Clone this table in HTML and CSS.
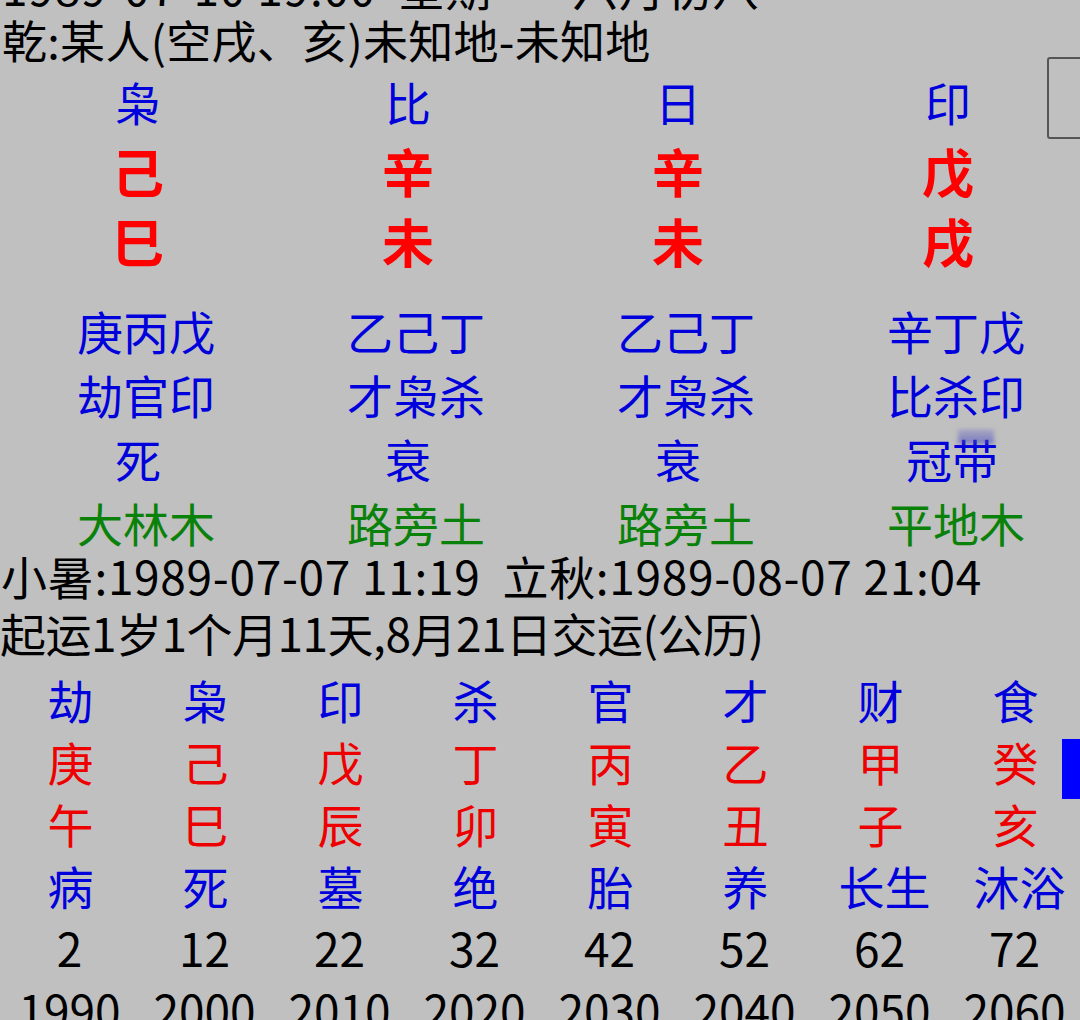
FILE: index.html
```html
<!DOCTYPE html>
<html lang="zh-CN">
<head>
<meta charset="utf-8">
<title>八字排盘</title>
<link rel="stylesheet" href="styles.css">
</head>
<body>
<div class="screen">
  <header class="head">
    <div class="line top">1989-07-10 19:00&nbsp;&nbsp;星期一&nbsp;&nbsp;&nbsp;六月初八</div>
    <div class="line title">乾:某人(空戌、亥)未知地-未知地</div>
  </header>

  <section class="pillars">
    <div class="god n1">枭</div><div class="god n1">比</div><div class="god n1">日</div><div class="god n1">印</div>
    <div class="stem n1">己</div><div class="stem n1">辛</div><div class="stem n1">辛</div><div class="stem n1">戊</div>
    <div class="stem n1">巳</div><div class="stem n1">未</div><div class="stem n1">未</div><div class="stem n1">戌</div>
  </section>

  <section class="hidden">
    <div class="god n3">庚丙戊</div><div class="god n3">乙己丁</div><div class="god n3">乙己丁</div><div class="god n3">辛丁戊</div>
    <div class="god n3">劫官印</div><div class="god n3">才枭杀</div><div class="god n3">才枭杀</div><div class="god n3">比杀印</div>
    <div class="god n1">死</div><div class="god n1">衰</div><div class="god n1">衰</div><div class="god n2">冠带</div>
    <div class="nayin n3">大林木</div><div class="nayin n3">路旁土</div><div class="nayin n3">路旁土</div><div class="nayin n3">平地木</div>
  </section>

  <section class="info">
    <div class="info-a">小暑:1989-07-07 11:19&nbsp;&nbsp;立秋:1989-08-07 21:04</div>
    <div class="info-b">起运1岁1个月11天,8月21日交运(公历)</div>
  </section>

  <section class="dayun">
    <div class="god n1">劫</div><div class="god n1">枭</div><div class="god n1">印</div><div class="god n1">杀</div><div class="god n1">官</div><div class="god n1">才</div><div class="god n1">财</div><div class="god n1">食</div>
    <div class="red n1">庚</div><div class="red n1">己</div><div class="red n1">戊</div><div class="red n1">丁</div><div class="red n1">丙</div><div class="red n1">乙</div><div class="red n1">甲</div><div class="red n1">癸</div>
    <div class="red n1">午</div><div class="red n1">巳</div><div class="red n1">辰</div><div class="red n1">卯</div><div class="red n1">寅</div><div class="red n1">丑</div><div class="red n1">子</div><div class="red n1">亥</div>
    <div class="god n1">病</div><div class="god n1">死</div><div class="god n1">墓</div><div class="god n1">绝</div><div class="god n1">胎</div><div class="god n1">养</div><div class="god n2">长生</div><div class="god n2">沐浴</div>
    <div class="num">2</div><div class="num">12</div><div class="num">22</div><div class="num">32</div><div class="num">42</div><div class="num">52</div><div class="num">62</div><div class="num">72</div>
    <div class="num">1990</div><div class="num">2000</div><div class="num">2010</div><div class="num">2020</div><div class="num">2030</div><div class="num">2040</div><div class="num">2050</div><div class="num">2060</div>
  </section>

  <div class="scroll-box"></div>
  <div class="scroll-bar"></div>
  <div class="smudge"></div>
</div>
</body>
</html>
```

FILE: styles.css
```css
* {
  box-sizing: border-box;
}

html,
body {
  margin: 0;
  padding: 0;
  background: #c0c0c0;
}

.screen {
  position: relative;
  width: 1080px;
  height: 1020px;
  overflow: hidden;
  font-family: "Noto Sans CJK SC", "Noto Sans", sans-serif;
  font-size: 46px;
  color: #000;
}

.head {
  margin-top: -40px;
  padding-left: 2px;
  font-size: 45px;
  line-height: 53px;
  white-space: nowrap;
}

.top {
  font-size: 46px;
  letter-spacing: 0.8px;
}

.title {
  letter-spacing: 0.3px;
}

.pillars,
.hidden {
  display: grid;
  grid-template-columns: repeat(4, 270px);
  text-align: center;
}

.pillars {
  grid-auto-rows: 70px;
  line-height: 70px;
}

.hidden {
  margin-top: 22px;
  grid-auto-rows: 64px;
  line-height: 64px;
}

.dayun {
  display: grid;
  grid-template-columns: repeat(8, 135px);
  grid-auto-rows: 62px;
  line-height: 62px;
  text-align: center;
}

.god {
  color: #0000dd;
}

.stem {
  color: #f00;
  font-weight: 700;
  font-size: 52px;
}

.red {
  color: #ee0000;
}

.nayin {
  color: #0a820a;
}

.num {
  color: #000;
  padding-left: 4px;
}

.n1 {
  padding-left: 6px;
}

.n2 {
  padding-left: 14px;
}

.n3 {
  padding-left: 22px;
}

.info {
  white-space: nowrap;
}

.info-a {
  height: 43px;
  line-height: 43px;
  padding-left: 1px;
  letter-spacing: 0.7px;
}

.info-b {
  height: 71px;
  line-height: 71px;
  letter-spacing: -0.5px;
}

.scroll-box {
  position: absolute;
  left: 1047px;
  top: 57px;
  width: 44px;
  height: 82px;
  border: 2px solid #555;
  border-radius: 3px;
}

.scroll-bar {
  position: absolute;
  left: 1062px;
  top: 739px;
  width: 18px;
  height: 60px;
  background: #0000ff;
}

.smudge {
  position: absolute;
  left: 958px;
  top: 429px;
  width: 36px;
  height: 15px;
  background: linear-gradient(rgba(120, 120, 200, 0.3), rgba(70, 70, 190, 0.6));
  filter: blur(2px);
}
```
